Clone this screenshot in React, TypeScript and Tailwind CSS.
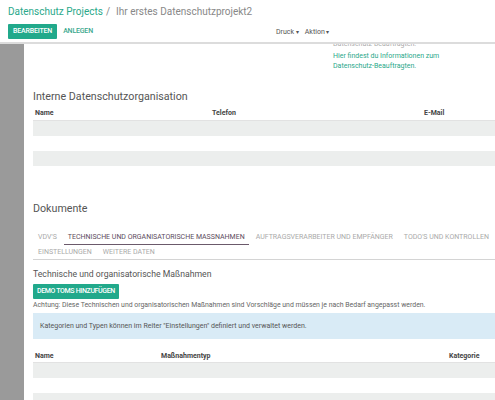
export default function App() {
  const tabsRow1 = [
    { label: "VDV'S", active: false },
    { label: "TECHNISCHE UND ORGANISATORISCHE MASSNAHMEN", active: true },
    { label: "AUFTRAGSVERARBEITER UND EMPFÄNGER", active: false },
    { label: "TODO'S UND KONTROLLEN", active: false },
  ];
  const tabsRow2 = ["EINSTELLUNGEN", "WEITERE DATEN"];

  return (
    <div
      className="w-[495px] h-[400px] overflow-hidden bg-white flex flex-col"
      style={{ fontFamily: "Roboto, 'Liberation Sans', sans-serif" }}
    >
      {/* Header */}
      <header className="h-[44px] shrink-0 px-[8px] pt-[4px] border-b-2 border-[#dcdcdc] relative z-10 bg-white">
        <div className="text-[10px] leading-[16px] whitespace-nowrap">
          <span className="text-[#2aa88a]">Datenschutz Projects</span>
          <span className="text-[#888] ml-[3px]">/</span>
          <span className="text-[#888] ml-[6px]">Ihr erstes Datenschutzprojekt2</span>
        </div>
        <div className="flex items-center mt-[4px] h-[15px]">
          <div className="w-[268px] flex items-center">
            <button className="h-[15px] px-[5px] bg-[#21a98b] text-white text-[7px] font-medium tracking-tight rounded-[1px]">
              BEARBEITEN
            </button>
            <span className="ml-[6px] text-[7px] text-[#3aa88e] font-medium tracking-tight">ANLEGEN</span>
          </div>
          <div className="flex gap-[6px] text-[7px] text-[#555] mt-[1px] whitespace-nowrap">
            <span>
              Druck <span className="text-[6px]">▾</span>
            </span>
            <span>
              Aktion <span className="text-[6px]">▾</span>
            </span>
          </div>
        </div>
      </header>

      {/* Body */}
      <div className="flex flex-1 min-h-0">
        <aside className="w-[24px] shrink-0 bg-[#9a9a9a]" />
        <main className="flex-1 min-w-0 overflow-hidden pl-[9px]">
          {/* top right info */}
          <div className="pl-[300px]">
            <div className="w-[150px] text-[7px] leading-[10px] -mt-[5px]">
              <div className="text-[#aaa]">Datenschutz-Beauftragten.</div>
              <div className="text-[#2aa88a] mt-[2px]">Hier findest du Informationen zum</div>
              <div className="text-[#2aa88a]">Datenschutz-Beauftragten.</div>
            </div>
          </div>

          {/* Interne Datenschutzorganisation */}
          <h2 className="mt-[19px] text-[10.7px] leading-[14px] text-[#555] whitespace-nowrap">
            Interne Datenschutzorganisation
          </h2>
          <div className="mt-[2px] w-[520px]">
            <div className="grid grid-cols-[177px_212px_1fr] px-[2px] h-[15px] items-center text-[7px] font-bold text-[#444] border-b border-[#e2e2e2]">
              <span>Name</span>
              <span>Telefon</span>
              <span>E-Mail</span>
            </div>
            <div className="h-[15px] bg-[#eceeed]" />
            <div className="h-[15px] bg-white" />
            <div className="h-[15px] bg-[#eceeed]" />
          </div>

          {/* Dokumente */}
          <h2 className="mt-[36px] text-[10.7px] leading-[14px] text-[#555]">Dokumente</h2>
          <div className="mt-[14px] border-b border-[#d4d4d4] w-[470px]">
            <div className="flex h-[15px] text-[7px] whitespace-nowrap">
              {tabsRow1.map((t, i) => (
                <div
                  key={t.label}
                  className={
                    (i === 0 ? "ml-[1px] " : "ml-[3px] ") +
                    (t.active
                      ? "px-[4px] h-[15px] leading-[14px] text-[#5d4b5d] border-b border-[#6b5a6b]"
                      : "px-[4px] h-[15px] leading-[14px] text-[#aaa]")
                  }
                >
                  {t.label}
                </div>
              ))}
            </div>
            <div className="flex h-[14px] text-[7px] leading-[14px] text-[#aaa] whitespace-nowrap">
              {tabsRow2.map((t, i) => (
                <div key={t} className={(i === 0 ? "ml-[1px] " : "ml-[3px] ") + "px-[4px]"}>
                  {t}
                </div>
              ))}
            </div>
          </div>

          {/* TOMs section */}
          <h3 className="mt-[8px] text-[8.7px] leading-[12px] text-[#555] whitespace-nowrap">
            Technische und organisatorische Maßnahmen
          </h3>
          <button className="block mt-[4px] h-[15px] px-[4px] bg-[#21a98b] text-white text-[7px] font-medium tracking-tighter rounded-[1px]">
            DEMO TOMS HINZUFÜGEN
          </button>
          <p className="mt-[1px] text-[6.9px] leading-[10px] text-[#666] whitespace-nowrap">
            Achtung: Diese Technischen und organisatorischen Maßnahmen sind Vorschläge und müssen je nach Bedarf angepasst werden.
          </p>
          <div className="mt-[3px] h-[26px] bg-[#d9ebf6] pl-[7px] flex items-center text-[7px] text-[#555] whitespace-nowrap w-[480px]">
            Kategorien und Typen können im Reiter "Einstellungen" definiert und verwaltet werden.
          </div>
          <div className="mt-[11px] w-[480px]">
            <div className="grid grid-cols-[126px_288px_1fr] px-[2px] h-[13px] items-center text-[7px] font-bold text-[#444] border-b border-[#e2e2e2]">
              <span>Name</span>
              <span>Maßnahmentyp</span>
              <span>Kategorie</span>
            </div>
            <div className="h-[15px] bg-[#eceeed]" />
            <div className="h-[15px] bg-white" />
            <div className="h-[15px] bg-[#eceeed]" />
          </div>
        </main>
      </div>
    </div>
  );
}
